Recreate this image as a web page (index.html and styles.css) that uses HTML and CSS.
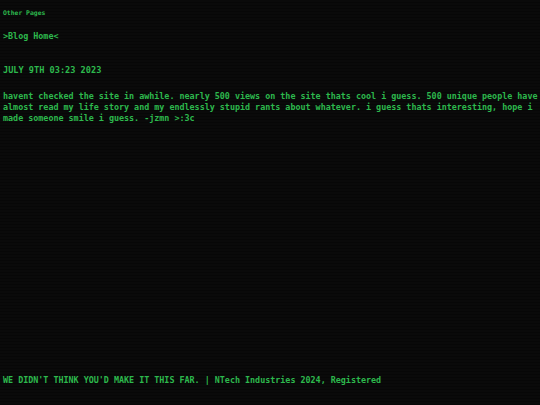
FILE: index.html
```html
<!DOCTYPE html>
<html lang="en">
<head>
<meta charset="utf-8">
<title>Blog</title>
<link rel="stylesheet" href="styles.css">
</head>
<body>
<div class="page">
  <div class="nav-title">Other Pages</div>
  <a class="home-link" href="#">&gt;Blog Home&lt;</a>
  <h1 class="post-title">JULY 9TH 03:23 2023</h1>
  <p class="post-body">havent checked the site in awhile. nearly 500 views on the site thats cool i guess. 500 unique people have almost read my life story and my endlessly stupid rants about whatever. i guess thats interesting, hope i made someone smile i guess. -jzmn &gt;:3c</p>
  <footer class="footer">WE DIDN'T THINK YOU'D MAKE IT THIS FAR. | NTech Industries 2024, Registered</footer>
</div>
</body>
</html>
```
FILE: styles.css
```css
html, body {
  margin: 0;
  padding: 0;
  height: 100%;
}
body {
  background-color: #090909;
  background-image: repeating-linear-gradient(to bottom, #0a0a0a 0px, #0a0a0a 2px, #070707 2px, #070707 3px);
  color: #2db94d;
  font-family: "DejaVu Sans Mono", "Liberation Mono", monospace;
  font-weight: bold;
}
.page {
  display: flex;
  flex-direction: column;
  align-items: flex-start;
  min-height: 100vh;
  box-sizing: border-box;
  padding: 0 0 19px 3px;
}
.nav-title {
  font-size: 6.4px;
  line-height: 8px;
  margin-top: 9px;
}
.home-link {
  color: #2db94d;
  text-decoration: none;
  font-size: 8.4px;
  line-height: 11px;
  margin-top: 14px;
}
.post-title {
  font-size: 8.6px;
  line-height: 11px;
  margin: 23px 0 0 0;
  font-weight: bold;
}
.post-body {
  font-size: 8.4px;
  line-height: 11px;
  margin: 15px 0 0 0;
  font-weight: bold;
}
.footer {
  margin-top: auto;
  font-size: 8.4px;
  line-height: 11px;
}
```
